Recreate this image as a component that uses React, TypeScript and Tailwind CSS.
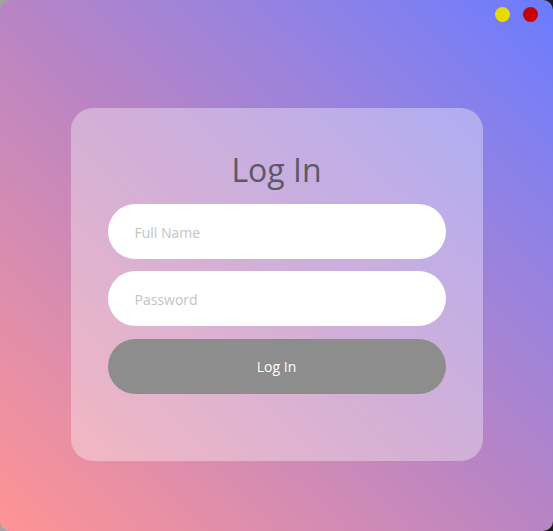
export default function App() {
  return (
    <div className="h-[531px] w-[553px] bg-linear-to-r from-[#a3a3a3] to-[#1c1c1c]">
      <div
        className="flex h-full w-full flex-col overflow-hidden rounded-[10px] bg-linear-to-tr from-[#ff9393] via-[#b884c4] to-[#6a7bff]"
        style={{ fontFamily: '"Open Sans", "Noto Sans", sans-serif' }}
      >
        <div className="flex h-[38px] shrink-0 items-start justify-end gap-[13px] pr-[15px] pt-[7px]">
          <span className="h-[15px] w-[15px] rounded-full bg-[#e6dc00]" />
          <span className="h-[15px] w-[15px] rounded-full bg-[#c80000]" />
        </div>
        <div className="flex flex-1 items-center justify-center">
          <form className="flex w-[412px] flex-col rounded-[22px] bg-white/35 px-[37px] pb-[67px] pt-[40px]">
            <h1 className="mb-[12px] text-center text-[32px] leading-[44px] text-[#5e5868]">Log In</h1>
            <input
              className="h-[55px] w-full rounded-full bg-white px-[27px] pt-[1px] text-[14px] text-gray-700 outline-none placeholder:text-[#c4c4c4]"
              placeholder="Full Name"
            />
            <input
              className="mt-[12px] h-[55px] w-full rounded-full bg-white px-[27px] pt-[1px] text-[14px] text-gray-700 outline-none placeholder:text-[#c4c4c4]"
              placeholder="Password"
              type="password"
            />
            <button
              type="button"
              className="mt-[13px] h-[55px] w-full rounded-full bg-[#8d8d8d] text-[14px] text-white"
            >
              Log In
            </button>
          </form>
        </div>
      </div>
    </div>
  );
}
